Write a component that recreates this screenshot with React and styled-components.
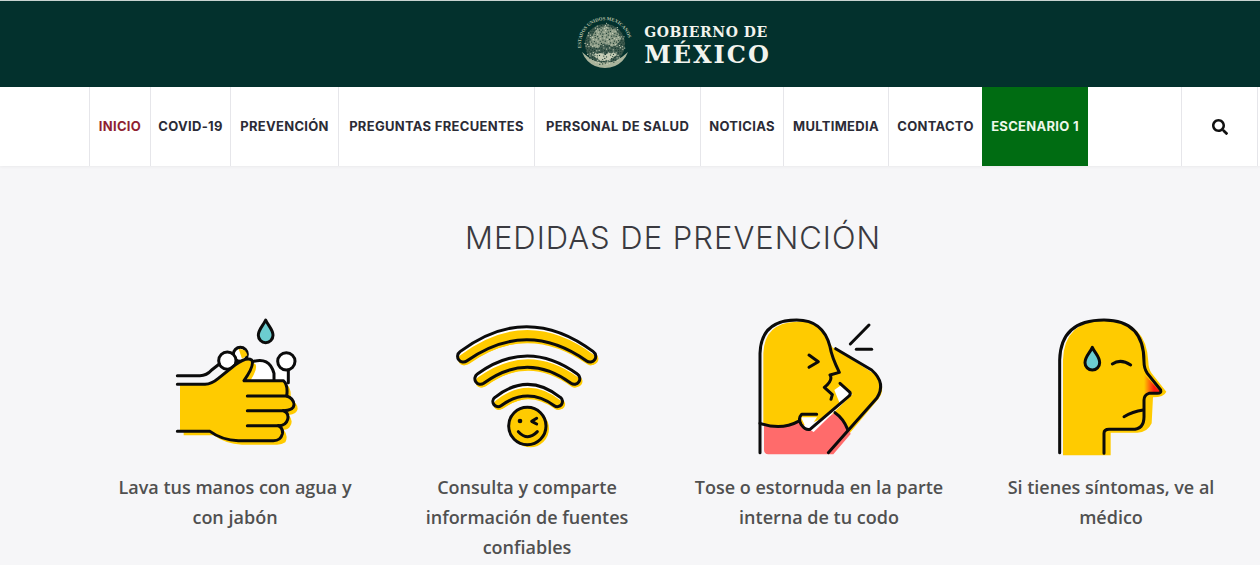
import React from 'react';
import styled, { createGlobalStyle } from 'styled-components';
import { FaSearch } from 'react-icons/fa';

const GlobalStyle = createGlobalStyle`
    html, body {
        margin: 0;
        padding: 0;
        background: #f6f6f8;
        overflow: hidden;
    }
`;

const YELLOW = '#ffcb00';
const INK = '#0b0b0b';
const STROKE = 9;
const line = { fill: 'none', stroke: INK, strokeWidth: STROKE, strokeLinecap: 'round', strokeLinejoin: 'round' };

const Drop = ({ x, y }) => (
    <path d={`M${x} ${y} C${x + 8} ${y + 18} ${x + 22} ${y + 28} ${x + 22} ${y + 46} A22 22 0 0 1 ${x - 22} ${y + 46} C${x - 22} ${y + 28} ${x - 8} ${y + 18} ${x} ${y}Z`} fill="#6ccdd0" stroke={INK} strokeWidth={STROKE} strokeLinejoin="round" />
);

// the drawings were traced at 3x, shift nudges them inside their column
const IconSvg = ({ shift = 0, children }) => (
    <svg width="170" height="150" viewBox={`${-shift * 3} 0 510 450`} aria-hidden="true">{children}</svg>
);

const HandIcon = () => {
    const palm = 'M90 223 H165 Q185 222 205 205 L255 165 Q290 140 305 150 Q315 165 282 212 H400 Q415 225 410 258 Q432 265 432 285 Q430 300 405 303 Q420 320 410 335 Q405 347 390 347 Q405 365 395 385 Q385 392 370 392 H265 Q215 390 180 364 H90 Z';
    return (
        <IconSvg>
            <Drop x={347} y={30} />
            <path d="M300 156 Q358 138 372 214 H290 Z" fill="#fff" />
            <path d="M372 172 L415 178 V222 H372 Z" fill="#fff" />
            <path d={palm} fill={YELLOW} transform="translate(11 12)" />
            <path {...line} d="M305 156 Q358 138 372 190 V212 M415 178 V218" />
            <circle cx="271" cy="133" r="21" fill="#fff" stroke={INK} strokeWidth={STROKE} />
            <path d="M266 117 Q288 116 292 136 L276 146Z" fill={YELLOW} />
            <circle cx="232" cy="152" r="26" fill="#fff" stroke={INK} strokeWidth={STROKE} />
            <circle cx="409" cy="154" r="26" fill="#fff" stroke={INK} strokeWidth={STROKE} />
            <path d={palm} fill={YELLOW} />
            <path {...line} d="M82 197 H150 Q170 197 185 180 L208 162" />
            <path {...line} d="M82 223 H165 Q185 222 205 205 L255 165 Q290 140 305 150 Q315 165 282 212 H400 Q415 225 410 258 H292" />
            <path {...line} d="M410 258 Q432 265 432 285 Q430 302 400 302 H292" />
            <path {...line} d="M400 302 Q418 310 413 328 Q408 347 385 347 H292" />
            <path {...line} d="M385 347 Q400 355 397 372 Q392 392 370 392 H265 Q215 390 180 364 H82" />
        </IconSvg>
    );
};

const WifiBar = ({ d }) => (
    <>
        <path d={d} fill={YELLOW} transform="translate(8 8)" />
        <path d={d} fill="#fff" />
        <path d={d} fill={YELLOW} transform="translate(2 10)" />
        <path d={d} fill="none" stroke={INK} strokeWidth={STROKE} strokeLinejoin="round" />
    </>
);

const WifiIcon = () => (
    <IconSvg shift={3}>
        <WifiBar d="M45 125 Q245 -25 445 125 A16 16 0 0 1 425 153 Q245 26 65 153 A16 16 0 0 1 45 125Z" />
        <WifiBar d="M97 192 Q247 84 397 192 A16 16 0 0 1 378 220 Q247 124 116 220 A16 16 0 0 1 97 192Z" />
        <WifiBar d="M150 262 Q248 184 346 262 A15 15 0 0 1 328 287 Q248 229 168 287 A15 15 0 0 1 150 262Z" />
        <circle cx="256" cy="356" r="56" fill={YELLOW} />
        <circle cx="247" cy="348" r="56" fill={YELLOW} stroke={INK} strokeWidth={STROKE} />
        <circle cx="225" cy="333" r="7" fill={INK} />
        <path {...line} d="M275 325 L260 334 L275 342" />
        <path {...line} d="M220 365 Q248 395 277 365" />
    </IconSvg>
);

const CoughIcon = () => (
    <IconSvg shift={1}>
        <path d="M85 345 V130 Q88 38 185 35 Q265 32 285 100 L292 112 L415 190 Q458 225 432 265 L342 372 L300 310 L215 345 Q150 355 85 345Z" fill={YELLOW} />
        <path d="M87 340 Q140 358 195 330 L215 360 L300 308 Q330 320 347 372 L295 433 H100 Q87 432 87 420Z" fill="#ff6b6b" />
        <path d="M298 240 L318 226 L345 250 L314 280Z" fill="#fff" />
        <path d="M353 252 L236 366 L226 360 L345 250Z" fill="#fff" />
        <path d="M198 322 H246 L226 352 H212Z" fill="#fff" />
        <path {...line} d="M75 428 V130 Q78 30 185 30 Q265 30 285 110 Q290 140 313 187 L285 195 Q295 210 268 232 L292 254 L288 268" />
        <path {...line} d="M302 116 L410 180 Q455 220 425 265 L280 428" />
        <path {...line} d="M315 220 L345 247 Q348 254 340 260 L225 358 Q212 362 198 343 Q188 326 200 313 H245" />
        <path {...line} d="M75 340 Q140 362 190 334" />
        <path {...line} d="M300 308 Q325 325 338 358" />
        <path {...line} d="M222 135 L250 155 L222 172" />
        <path {...line} d="M346 102 L402 45" />
        <path {...line} d="M364 118 H410" />
    </IconSvg>
);

const SickIcon = () => (
    <IconSvg shift={3}>
        <defs>
            <linearGradient id="nose" x1="0" y1="0" x2="1" y2="0">
                <stop offset="0" stopColor="#ff1c10" stopOpacity="0" />
                <stop offset="0.6" stopColor="#ff1c10" />
            </linearGradient>
        </defs>
        <path d="M102 436 V150 Q105 32 230 30 Q352 32 358 155 Q358 175 368 190 L412 245 Q405 262 372 262 L368 340 Q355 368 325 368 H245 V436Z" fill={YELLOW} />
        <path d="M345 192 L395 246 L345 252Z" fill="url(#nose)" />
        <path {...line} d="M92 428 V150 Q95 30 225 30 Q345 30 345 155 Q345 175 355 190 L395 240 Q398 250 385 250 H360 Q345 255 345 270 V320 Q345 358 310 358 H240 Q225 358 225 370 V430" />
        <path {...line} d="M285 320 Q310 305 343 300" />
        <path {...line} d="M250 162 Q275 145 305 165" />
        <Drop x={190} y={112} />
    </IconSvg>
);

// fine specks that give the seal its engraved look
const specks = Array.from({ length: 240 }, (_, i) => {
    const a = i * 2.39996;
    const r = 1 + 20 * Math.sqrt(i / 240);
    return { x: 28 + r * Math.cos(a), y: 28 + r * Math.sin(a), light: i % 5 < 2 };
});

const Emblem = () => (
    <svg width="56" height="56" viewBox="0 0 56 56" aria-hidden="true">
        <defs>
            <path id="ringTop" d="M4.500 33 A24 24 0 1 1 51.500 33" />
        </defs>
        <text fontFamily="'Liberation Serif', serif" fontSize="4.800" fontWeight="700" fill="#b9c2a9">
            <textPath href="#ringTop" startOffset="1">ESTADOS UNIDOS MEXICANOS</textPath>
        </text>
        <circle cx="28" cy="28" r="20" fill="#3e5a4e" />
        <path d="M12 27 Q15 14 27 10 Q40 11 44 22 Q40 33 33 30 Q26 24 22 32 Q15 33 12 27Z" fill="#8b9b86" />
        <path d="M5 36 Q9 46 18 50 Q28 54 38 50 Q47 46 51 36 Q46 41 38 45 Q28 48 18 45 Q10 41 5 36Z" fill="#a9b49c" />
        <path d="M16 39 Q24 35 28 39 Q33 35 40 38 Q34 45 28 45 Q21 45 16 39Z" fill="#c4cbb4" />
        {specks.map((s) => (
            <circle key={`${s.x}-${s.y}`} cx={s.x} cy={s.y} r="0.600" fill={s.light ? '#cfd5bf' : '#14352d'} />
        ))}
    </svg>
);

const cards = [
    { Icon: HandIcon, text: 'Lava tus manos con agua y con jabón' },
    { Icon: WifiIcon, text: 'Consulta y comparte información de fuentes confiables' },
    { Icon: CoughIcon, text: 'Tose o estornuda en la parte interna de tu codo' },
    { Icon: SickIcon, text: 'Si tienes síntomas, ve al médico' },
];

const navItems = [
    { label: 'INICIO', width: 61, active: true },
    { label: 'COVID-19', width: 80 },
    { label: 'PREVENCIÓN', width: 108 },
    { label: 'PREGUNTAS FRECUENTES', width: 196 },
    { label: 'PERSONAL DE SALUD', width: 166 },
    { label: 'NOTICIAS', width: 83 },
    { label: 'MULTIMEDIA', width: 105 },
    { label: 'CONTACTO', width: 94 },
];

const App = () => (
    <Page>
        <GlobalStyle />
        <TopBar>
            <Logo>
                <Emblem />
                <LogoText>
                    <small>GOBIERNO DE</small>
                    <strong>MÉXICO</strong>
                </LogoText>
            </Logo>
        </TopBar>
        <NavBar>
            <NavList>
                {navItems.map((item) => (
                    <NavItem key={item.label} $width={item.width} $active={item.active}>{item.label}</NavItem>
                ))}
                <ScenarioItem>ESCENARIO 1</ScenarioItem>
            </NavList>
            <SearchCell><FaSearch size={16} /></SearchCell>
        </NavBar>
        <Main>
            <Title>MEDIDAS DE PREVENCIÓN</Title>
            <CardGrid>
                {cards.map(({ Icon, text }) => (
                    <Card key={text}>
                        <Icon />
                        <Caption>{text}</Caption>
                    </Card>
                ))}
            </CardGrid>
        </Main>
    </Page>
);

const Page = styled.div`
    width: 1260px;
    height: 565px;
    overflow: hidden;
    background: #f6f6f8;
`;

const TopBar = styled.header`
    height: 87px;
    box-sizing: border-box;
    border-top: 1px solid #c9d3d0;
    background: #03312d;
    display: flex;
    justify-content: center;
    padding-left: 88px;
`;

const Logo = styled.div`
    display: flex;
    align-items: center;
    gap: 11px;
`;

const LogoText = styled.div`
    display: flex;
    flex-direction: column;
    padding-top: 5px;
    color: #f2f4ee;
    font-family: 'DejaVu Serif', serif;
    font-weight: 700;
    small {
        font-size: 14px;
        line-height: 16px;
        letter-spacing: 0.550px;
    }
    strong {
        font-size: 24px;
        line-height: 29px;
        letter-spacing: 2px;
    }
`;

const NavBar = styled.nav`
    height: 79px;
    background: #fff;
    display: flex;
    padding-left: 89px;
    padding-right: 2px;
    box-shadow: 0 1px 3px rgba(0, 0, 0, 0.05);
    font-family: Inter, 'Liberation Sans', sans-serif;
    font-weight: 700;
    font-size: 13px;
    letter-spacing: 0.300px;
`;

const NavList = styled.div`
    flex: 1;
    display: flex;
`;

const NavItem = styled.div`
    width: ${(p) => p.$width}px;
    flex: none;
    box-sizing: border-box;
    border-left: 1px solid #e6e6ea;
    padding-bottom: 2px;
    display: flex;
    align-items: center;
    justify-content: center;
    white-space: nowrap;
    color: ${(p) => (p.$active ? '#8f1f32' : '#2b2b36')};
`;

const ScenarioItem = styled.div`
    width: 106px;
    flex: none;
    margin-right: auto;
    padding-bottom: 2px;
    box-sizing: border-box;
    background: #006c12;
    color: #eef8ea;
    display: flex;
    align-items: center;
    justify-content: center;
    white-space: nowrap;
`;

const SearchCell = styled.div`
    width: 77px;
    flex: none;
    box-sizing: border-box;
    border-left: 1px solid #e6e6ea;
    border-right: 1px solid #e6e6ea;
    display: flex;
    align-items: center;
    justify-content: center;
    color: #111;
`;

const Main = styled.main`
    margin: 0 3px 0 89px;
    padding-top: 53px;
`;

const Title = styled.h1`
    margin: 0;
    text-align: center;
    font-family: Inter, 'Liberation Sans', sans-serif;
    font-weight: 300;
    font-size: 31px;
    line-height: 38px;
    letter-spacing: 1px;
    color: #3a3a40;
`;

const CardGrid = styled.div`
    display: grid;
    grid-template-columns: repeat(4, 292px);
    margin-top: 53px;
`;

const Card = styled.div`
    display: flex;
    flex-direction: column;
    align-items: center;
`;

const Caption = styled.p`
    margin: 12px 0 0;
    width: 250px;
    text-align: center;
    font-family: 'Open Sans', 'Liberation Sans', sans-serif;
    font-weight: 600;
    font-size: 18px;
    line-height: 30px;
    color: #505050;
`;

export default App;
